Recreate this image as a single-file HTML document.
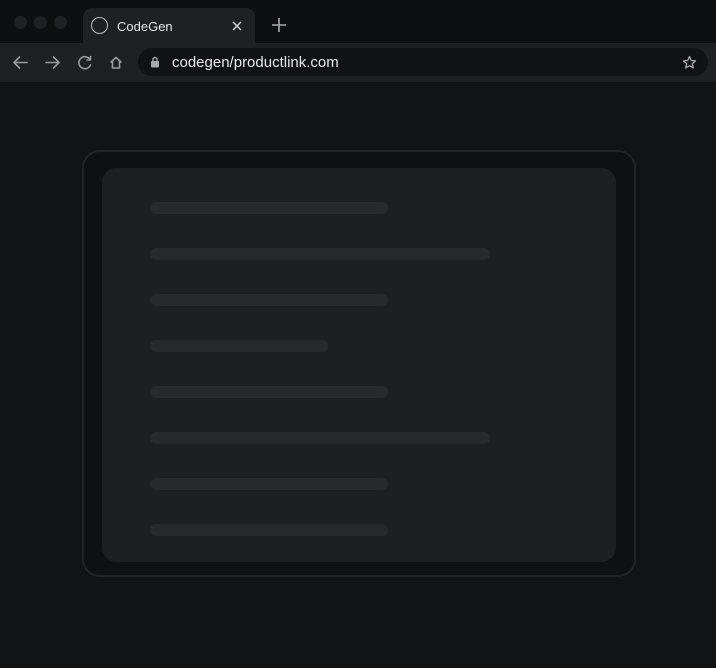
<!DOCTYPE html>
<html><head><style>
*{margin:0;padding:0;box-sizing:border-box}
body{width:716px;height:668px;background:#121315;font-family:"Liberation Sans",sans-serif;position:relative;overflow:hidden}
.top{position:absolute;left:0;top:0;width:716px;height:43px;background:#0e0f11}
.dot{position:absolute;top:16px;width:13px;height:13px;border-radius:50%;background:#1f2023}
.tab{position:absolute;left:83px;top:8px;width:172px;height:36px;background:#1f2023;border-radius:9px 9px 0 0}
.tab .c{position:absolute;left:8px;top:9px;width:17px;height:17px;border:1.5px solid #bbb;border-radius:50%}
.tab .t{position:absolute;left:34px;top:11px;color:#e6e6e6;font-size:13px}
.plus{position:absolute;left:272px;top:18px}
.bar{position:absolute;left:0;top:43px;width:716px;height:39px;background:#1f2023}
.url{position:absolute;left:138px;top:48px;width:570px;height:28px;background:#111214;border-radius:14px}
.url .t{position:absolute;left:34px;top:6px;color:#e8e8e8;font-size:15px}
.outer{position:absolute;left:82px;top:150px;width:554px;height:427px;border:2px solid #232427;border-radius:18px;background:#0f1012}
.inner{position:absolute;left:102px;top:168px;width:514px;height:394px;background:#1e1f21;border-radius:15px}
.b{position:absolute;left:150px;height:12px;border-radius:6px;background:#28292b}
</style></head><body>
<div class="top"></div>
<div class="dot" style="left:14px"></div><div class="dot" style="left:34px"></div><div class="dot" style="left:54px"></div>
<div class="tab"><div class="c"></div><div class="t">CodeGen</div>
<svg style="position:absolute;left:149px;top:13px" width="10" height="10"><path d="M1 1L9 9M9 1L1 9" stroke="#ddd" stroke-width="1.4"/></svg></div>
<svg class="plus" width="14" height="14"><path d="M7 0V14M0 7H14" stroke="#aaa" stroke-width="1.6"/></svg>
<div class="bar"></div>
<svg style="position:absolute;left:0;top:43px" width="140" height="39" fill="none" stroke="#9a9a9a" stroke-width="1.6" stroke-linecap="round" stroke-linejoin="round">
<path d="M27 19.5H14M19.5 14L14 19.5L19.5 25"/>
<path d="M46 19.5H59M53.5 14L59 19.5L53.5 25"/>
<path d="M90 16.5A6 6 0 1 0 90.5 22M90.5 13.5V17H87"/>
<path d="M111 19L116 14.5L121 19M112.5 18V25H119.5V18"/>
</svg>
<div class="url"><svg style="position:absolute;left:12px;top:8px" width="10" height="12"><rect x="1" y="5" width="8" height="6.5" rx="1" fill="#aaa"/><path d="M3 5V3.5A2 2 0 0 1 7 3.5V5" stroke="#aaa" stroke-width="1.4" fill="none"/></svg><div class="t">codegen/productlink.com</div>
<svg style="position:absolute;left:544px;top:7px" width="15" height="15"><path d="M7.5 1.5L9.3 5.5L13.5 5.9L10.3 8.7L11.3 12.9L7.5 10.7L3.7 12.9L4.7 8.7L1.5 5.9L5.7 5.5Z" fill="none" stroke="#aaa" stroke-width="1.3" stroke-linejoin="round"/></svg></div>
<div class="outer"></div>
<div class="inner"></div>
<div class="b" style="top:202px;width:238px"></div>
<div class="b" style="top:248px;width:340px"></div>
<div class="b" style="top:294px;width:238px"></div>
<div class="b" style="top:340px;width:178px"></div>
<div class="b" style="top:386px;width:238px"></div>
<div class="b" style="top:432px;width:340px"></div>
<div class="b" style="top:478px;width:238px"></div>
<div class="b" style="top:524px;width:238px"></div>
</body></html>
